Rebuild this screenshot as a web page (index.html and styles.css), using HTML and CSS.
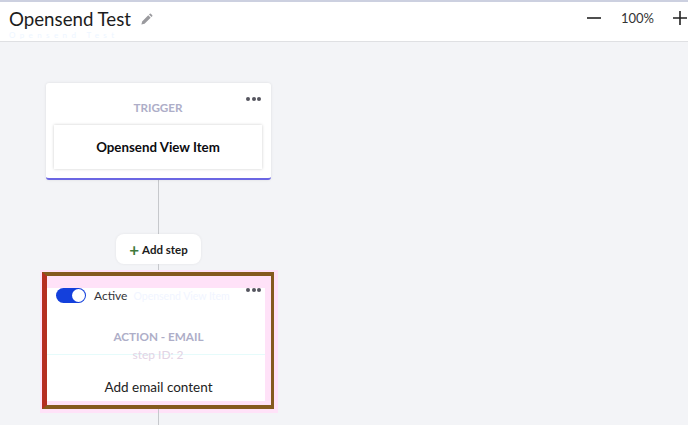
FILE: index.html
```html
<!DOCTYPE html>
<html lang="en">
<head>
<meta charset="utf-8">
<title>Opensend Test</title>
<link rel="stylesheet" href="styles.css">
</head>
<body>
<header class="topbar">
  <div class="title-group">
    <div class="title-row">
      <h1 class="title">Opensend Test</h1>
      <svg class="pencil" width="13" height="13" viewBox="0 0 14 14"><path d="M1.5 12.5l.8-3.4 6.6-6.6 2.6 2.6-6.6 6.6zM9.7 1.7l.9-.9a.8.8 0 0 1 1.1 0l1.5 1.5a.8.8 0 0 1 0 1.1l-.9.9z" fill="#9a9a9e"/></svg>
    </div>
    <div class="ghost-sub">Opensend Test</div>
  </div>
  <div class="zoom">
    <svg class="zoom-icon" width="14" height="14" viewBox="0 0 14 14"><path d="M0 7h14" stroke="#222" stroke-width="1.6"/></svg>
    <span class="zoom-value">100%</span>
    <svg class="zoom-icon" width="14" height="14" viewBox="0 0 14 14"><path d="M0 7h14M7 0v14" stroke="#222" stroke-width="1.6"/></svg>
  </div>
</header>
<main class="canvas">
  <section class="card trigger">
    <div class="dots"><i></i><i></i><i></i></div>
    <div class="card-label trigger-label">TRIGGER</div>
    <div class="inner-box">Opensend View Item</div>
  </section>
  <div class="line line-a"></div>
  <button class="add-step"><span class="plus">+</span><span>Add step</span></button>
  <div class="line line-b"></div>
  <section class="highlight">
    <div class="card action">
      <div class="action-top">
        <span class="toggle"><span class="knob"></span></span>
        <span class="active-text">Active</span>
        <span class="ghost-name">Opensend View Item</span>
        <div class="dots action-dots"><i></i><i></i><i></i></div>
      </div>
      <div class="card-label action-label">ACTION - EMAIL</div>
      <div class="step-id">step ID: 2</div>
      <div class="email-content">Add email content</div>
    </div>
  </section>
  <div class="line line-c"></div>
</main>
</body>
</html>
```
FILE: styles.css
```css
* { box-sizing: border-box; }
html, body { margin: 0; height: 100%; }
body {
  height: 425px;
  overflow: hidden;
  background: #f3f4f7;
  font-family: Lato, "Open Sans", sans-serif;
  color: #1c1c20;
}
.topbar {
  height: 42px;
  background: #fff;
  border-top: 2px solid #ccd0e0;
  border-bottom: 1px solid #dfe0e3;
  display: flex;
  justify-content: space-between;
  padding: 0 1px 0 9px;
}
.title-row { display: flex; align-items: center; gap: 9px; padding-top: 5px; }
.title { margin: 0; font-size: 18.7px; font-weight: 400; line-height: 24px; }
.ghost-sub { font-size: 8px; line-height: 9px; letter-spacing: 4.4px; color: #eef6ff; white-space: nowrap; }
.zoom { display: flex; align-items: center; height: 32px; }
.zoom-icon { display: block; }
.zoom-value { font-size: 13px; color: #333; margin: 0 19px 0 20px; }
.canvas { display: flex; flex-direction: column; align-items: center; width: 233px; margin-left: 42px; padding-top: 41px; }
.card { width: 225px; background: #fff; position: relative; }
.trigger {
  height: 97px;
  border-radius: 3px;
  border-bottom: 2px solid #6b66e3;
  box-shadow: 0 0 3px rgba(0, 0, 0, 0.1);
  padding: 16px 9px 0 8px;
}
.dots { position: absolute; right: 10px; top: 14px; display: flex; gap: 1.5px; }
.dots i { width: 4px; height: 4px; border-radius: 50%; background: #55555f; }
.card-label { text-align: center; font-weight: 700; font-size: 11.7px; color: #aeaec8; line-height: 17px; }
.trigger-label { margin-bottom: 9px; }
.inner-box {
  height: 44px;
  background: #fff;
  box-shadow: 0 0 3px rgba(0, 0, 0, 0.2);
  display: flex;
  align-items: center;
  justify-content: center;
  font-size: 13.3px;
  font-weight: 700;
  color: #0c0c10;
}
.line { width: 1px; background: #c6c8cc; }
.line-a { height: 54px; }
.line-b { height: 8px; }
.line-c { height: 16px; }
.add-step {
  width: 85px;
  height: 30px;
  border: none;
  border-radius: 8px;
  background: #fff;
  box-shadow: 0 0 3px rgba(0, 0, 0, 0.07);
  font: 700 11.5px Lato, "Open Sans", sans-serif;
  color: #1c1c20;
  padding: 0;
  display: flex;
  align-items: center;
  justify-content: center;
  gap: 3px;
}
.plus { color: #3f7a3c; font-size: 17px; font-weight: 700; line-height: 1; }
.highlight {
  align-self: flex-start;
  width: 232px;
  height: 137px;
  border-style: solid;
  border-width: 4px 3px 4px 5px;
  border-color: #855a1e #855a1e #855a1e #b52e22;
  box-shadow: 1px 1px 0 3px #ffe2f8;
  background: #ffe2f8;
  padding: 12px 6px 4px 0;
}
.action { width: auto; height: 100%; }
.action-top { display: flex; align-items: center; height: 15px; padding-left: 9px; position: relative; }
.toggle { width: 30px; height: 15px; border-radius: 8px; background: #1440dc; position: relative; flex: none; }
.knob { position: absolute; right: 1px; top: 1px; width: 13px; height: 13px; border-radius: 50%; background: #fff; }
.active-text { font-size: 12px; margin-left: 8px; color: #333338; }
.ghost-name { font-size: 10.5px; margin-left: 6px; color: #f1f5ff; white-space: nowrap; }
.action-dots { right: 4px; top: 0; }
.action-label { margin-top: 25px; padding-left: 5px; }
.step-id { text-align: center; padding-left: 4px; font-size: 12px; line-height: 15px; color: #e2d3e4; margin-top: 2px; background: linear-gradient(#e6fbfb, #e6fbfb) 0 7px / 100% 1px no-repeat; }
.email-content { text-align: center; padding-left: 5px; font-size: 13.5px; line-height: 18px; color: #222; margin-top: 16px; }
```
